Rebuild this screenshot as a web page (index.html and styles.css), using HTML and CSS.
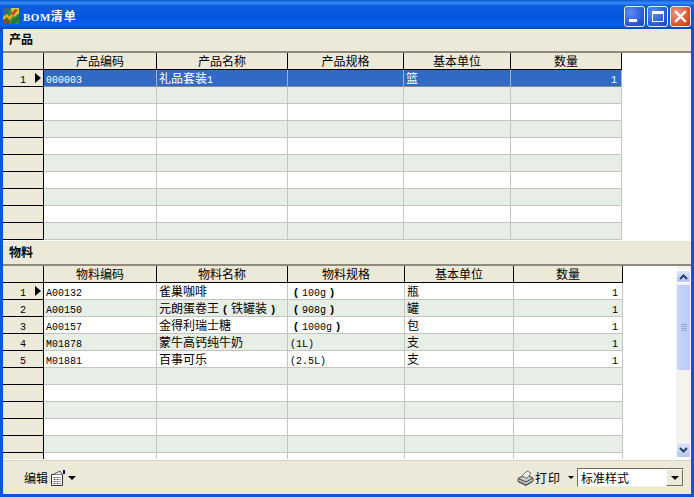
FILE: index.html
```html
<!DOCTYPE html>
<html lang="zh">
<head>
<meta charset="utf-8">
<title>BOM清单</title>
<link rel="stylesheet" href="styles.css">
</head>
<body>
<div class="window">
  <header class="titlebar">
    <svg class="app-icon" width="16" height="16" viewBox="0 0 16 16"><rect width="16" height="16" fill="#3d8a3c"/><path d="M0 0h8L5 5 0 7z" fill="#35648c"/><path d="M8 0h8v5l-5 4-2-3z" fill="#c8d040"/><path d="M0 9l4-3 2 3 5-7 3 0-7 10-3-3-4 3z" fill="#f0b020"/><path d="M8 6l4-5 3 1-5 6z" fill="#d8402a"/><path d="M0 12l5-1 2 5H0z" fill="#8a4a20"/><path d="M9 12l7-4v4l-4 4H8z" fill="#1c7a34"/></svg>
    <span class="title-text"><span class="lat">BOM</span>清单</span>
    <div class="caption-buttons">
      <div class="cap-btn cap-min"><i></i></div>
      <div class="cap-btn cap-max"><i></i></div>
      <div class="cap-btn cap-close">
        <svg width="13" height="13" viewBox="0 0 13 13"><path d="M2 2l9 9M11 2l-9 9" stroke="#fff" stroke-width="2.400" stroke-linecap="square"/></svg>
      </div>
    </div>
  </header>

  <main class="client">
    <div class="section-head section-head-top">产品</div>
    <div class="grid-wrap grid-wrap-top">
      <table class="grid grid-top">
        <colgroup><col class="c0"><col class="c1"><col class="c2"><col class="c3"><col class="c4"><col class="c5"></colgroup>
        <thead><tr><th></th><th>产品编码</th><th>产品名称</th><th>产品规格</th><th>基本单位</th><th>数量</th></tr></thead>
        <tbody>
          <tr class="selected"><th class="ind"><span>1</span><b class="arrow"></b></th><td><span class="lat">000003</span></td><td>礼品套装<span class="lat">1</span></td><td></td><td>篮</td><td class="num"><span class="lat">1</span></td></tr>
          <tr class="alt"><th></th><td></td><td></td><td></td><td></td><td></td></tr>
          <tr><th></th><td></td><td></td><td></td><td></td><td></td></tr>
          <tr class="alt"><th></th><td></td><td></td><td></td><td></td><td></td></tr>
          <tr><th></th><td></td><td></td><td></td><td></td><td></td></tr>
          <tr class="alt"><th></th><td></td><td></td><td></td><td></td><td></td></tr>
          <tr><th></th><td></td><td></td><td></td><td></td><td></td></tr>
          <tr class="alt"><th></th><td></td><td></td><td></td><td></td><td></td></tr>
          <tr><th></th><td></td><td></td><td></td><td></td><td></td></tr>
          <tr class="alt"><th></th><td></td><td></td><td></td><td></td><td></td></tr>
        </tbody>
      </table>
    </div>

    <div class="section-head section-head-bottom">物料</div>
    <div class="grid-wrap grid-wrap-bottom">
      <table class="grid grid-bottom">
        <colgroup><col class="c0"><col class="d1"><col class="d2"><col class="d3"><col class="d4"><col class="d5"></colgroup>
        <thead><tr><th></th><th>物料编码</th><th>物料名称</th><th>物料规格</th><th>基本单位</th><th>数量</th></tr></thead>
        <tbody>
          <tr><th class="ind"><span>1</span><b class="arrow"></b></th><td><span class="lat">A00132</span></td><td>雀巢咖啡</td><td><span class="paren">(</span><span class="lat">100g</span><span class="paren">)</span></td><td>瓶</td><td class="num"><span class="lat">1</span></td></tr>
          <tr class="alt"><th class="ind"><span>2</span></th><td><span class="lat">A00150</span></td><td>元朗蛋卷王<span class="paren">(</span>铁罐装<span class="paren">)</span></td><td><span class="paren">(</span><span class="lat">908g</span><span class="paren">)</span></td><td>罐</td><td class="num"><span class="lat">1</span></td></tr>
          <tr><th class="ind"><span>3</span></th><td><span class="lat">A00157</span></td><td>金得利瑞士糖</td><td><span class="paren">(</span><span class="lat">1000g</span><span class="paren">)</span></td><td>包</td><td class="num"><span class="lat">1</span></td></tr>
          <tr class="alt"><th class="ind"><span>4</span></th><td><span class="lat">M01878</span></td><td>蒙牛高钙纯牛奶</td><td><span class="lat">(1L)</span></td><td>支</td><td class="num"><span class="lat">1</span></td></tr>
          <tr><th class="ind"><span>5</span></th><td><span class="lat">M01881</span></td><td>百事可乐</td><td><span class="lat">(2.5L)</span></td><td>支</td><td class="num"><span class="lat">1</span></td></tr>
          <tr class="alt"><th></th><td></td><td></td><td></td><td></td><td></td></tr>
          <tr><th></th><td></td><td></td><td></td><td></td><td></td></tr>
          <tr class="alt"><th></th><td></td><td></td><td></td><td></td><td></td></tr>
          <tr><th></th><td></td><td></td><td></td><td></td><td></td></tr>
          <tr class="alt"><th></th><td></td><td></td><td></td><td></td><td></td></tr>
          <tr><th></th><td></td><td></td><td></td><td></td><td></td></tr>
        </tbody>
      </table>
      <div class="scrollbar">
        <div class="sb-btn sb-up"><svg width="9" height="6" viewBox="0 0 9 6"><path d="M1 5l3.500-3.500L8 5" fill="none" stroke="#2b3f6b" stroke-width="2"/></svg></div>
        <div class="sb-thumb"><i></i><i></i><i></i><i></i></div>
        <div class="sb-track"></div>
        <div class="sb-btn sb-down"><svg width="9" height="6" viewBox="0 0 9 6"><path d="M1 1l3.500 3.500L8 1" fill="none" stroke="#2b3f6b" stroke-width="2"/></svg></div>
      </div>
    </div>

    <footer class="toolbar">
      <div class="tool tool-edit">
        <span>编辑</span>
        <svg width="16" height="16" viewBox="0 0 16 16"><path d="M1.500 4.500h11v11h-11z" fill="#fff" stroke="#333"/><path d="M3 4.500l7-3.500 2.500 3.500" fill="#e4e4e4" stroke="#333" stroke-width=".8"/><path d="M3.500 7.500h7M3.500 9.500h7M3.500 11.500h7M3.500 13.500h7" stroke="#555" stroke-dasharray="2 1"/><rect x="13" y="0" width="2" height="4" fill="#00007a"/></svg>
        <b class="caret caret-edit"></b>
      </div>
      <div class="tool-right">
        <svg width="17" height="16" viewBox="0 0 17 16"><path d="M1 8.500l8-4 7 3.500v3l-7 4.500-8-4z" fill="#c9c9c9" stroke="#444"/><path d="M1 8.500l8 3.500 7-4" fill="none" stroke="#444"/><path d="M5 6l5-5 4 2-4 5z" fill="#fff" stroke="#555" stroke-width=".8"/><path d="M2 11l7 3.500 6-3.500v1.500l-6 3-7-3z" fill="#555"/></svg>
        <span class="print-label">打印</span>
        <b class="caret caret-print"></b>
        <div class="combo">
          <span>标准样式</span>
          <div class="combo-btn"><b class="caret caret-combo"></b></div>
        </div>
      </div>
    </footer>
  </main>
</div>
</body>
</html>
```

FILE: styles.css
```css
* { box-sizing: border-box; }
html, body { margin: 0; padding: 0; }
body {
  width: 694px;
  height: 497px;
  overflow: hidden;
  background: #ece9d8;
  font-family: "Noto Sans CJK SC", "Liberation Sans", sans-serif;
  font-size: 12px;
  color: #000;
}
.lat { font-family: "Liberation Mono", monospace; font-size: 10px; line-height: 10px; }
.paren {
  display: inline-block;
  width: 12px;
  text-align: center;
  font-family: "Liberation Mono", monospace;
  font-size: 11px;
  font-weight: 700;
  line-height: 10px;
}

.window {
  width: 694px;
  height: 497px;
  display: flex;
  flex-direction: column;
  background: #0a55e0;
}
.titlebar {
  height: 29px;
  flex: none;
  display: flex;
  align-items: center;
  padding: 3px 3px 0 3px;
  background: linear-gradient(#0a58d8 0, #3a8cf4 3px, #0a5ce4 6px, #0456dc 18px, #0660ec 25px, #0348bc 29px);
  color: #fff;
  font-weight: 700;
}
.app-icon { flex: none; margin-right: 4px; }
.title-text { font-size: 12px; letter-spacing: 1px; margin-top: -2px; }
.title-text .lat { font-size: 11px; font-family: "Liberation Serif", serif; letter-spacing: .5px; font-weight: 700; }
.caption-buttons { margin-left: auto; display: flex; gap: 2px; }
.cap-btn {
  width: 21px;
  height: 21px;
  border: 1px solid #e8f0ff;
  border-radius: 3px;
  background: radial-gradient(circle at 30% 30%, #5d8ef0, #2456d6 70%, #1a46b8);
  display: flex;
  align-items: center;
  justify-content: center;
  position: relative;
}
.cap-min i { position: absolute; left: 4px; bottom: 4px; width: 8px; height: 3px; background: #fff; }
.cap-max i { width: 12px; height: 11px; border: 1px solid #fff; border-top-width: 3px; }
.cap-close { background: radial-gradient(circle at 30% 30%, #ec9a80, #d8532c 65%, #b83a18); }

.client {
  flex: 1;
  margin: 0 3px 3px;
  min-height: 0;
  display: flex;
  flex-direction: column;
  background: #ece9d8;
}
.section-head {
  flex: none;
  font-weight: 700;
  font-size: 12px;
  padding: 0 0 3px 6px;
  display: flex;
  align-items: center;
  border-bottom: 2px solid #8e8b7e;
  background: #ece9d8;
}
.section-head-top { height: 24px; }
.section-head-bottom { height: 25px; }

.grid-wrap { flex: none; background: #fff; display: flex; overflow: hidden; position: relative; }
.grid-wrap-top { height: 188px; }
.grid-wrap-bottom { height: 193px; }
.grid {
  table-layout: fixed;
  border-collapse: separate;
  border-spacing: 0;
  flex: none;
  align-self: flex-start;
}
.grid-top { width: 619px; }
.grid-bottom { width: 620px; }
.c0 { width: 41px; }
.c1 { width: 113px; } .c2 { width: 131px; } .c3 { width: 116px; } .c4 { width: 107px; } .c5 { width: 111px; }
.d1 { width: 113px; } .d2 { width: 131px; } .d3 { width: 117px; } .d4 { width: 109px; } .d5 { width: 109px; }

.grid tr { height: 17px; }
.grid th, .grid td {
  height: 17px;
  padding: 0;
  font-weight: 400;
  font-size: 12px;
  line-height: 15px;
  vertical-align: top;
  overflow: hidden;
  white-space: nowrap;
}
.grid th {
  background: #ece9d8;
  border-right: 1px solid #000;
  border-bottom: 1px solid #000;
  text-align: center;
}
.grid td {
  background: #fff;
  border-right: 1px solid #c4c4c0;
  border-bottom: 1px solid #c4c4c0;
  padding-left: 2px;
}
.grid tr.alt td { background: #e7eee5; }
.grid tr.selected td { background: #316ac5; color: #fff; border-right-color: #9ab4dc; border-bottom-color: #888; }
.grid td.num { text-align: right; padding-right: 4px; }
.grid th.ind { position: relative; text-align: left; padding-left: 17px; }
.grid th.ind span { font-family: "Liberation Mono", monospace; font-size: 10px; line-height: 10px; }
.arrow {
  position: absolute;
  left: 32px;
  top: 3px;
  border-left: 6px solid #000;
  border-top: 5px solid transparent;
  border-bottom: 5px solid transparent;
}

.scrollbar {
  position: absolute;
  top: 0;
  left: 673px;
  width: 15px;
  height: 192px;
  display: flex;
  flex-direction: column;
  background: #f5f4ec;
  padding-top: 4px;
}
.sb-btn {
  height: 14px;
  flex: none;
  background: linear-gradient(#dbe5fb, #b4c7f1);
  border: 1px solid #fff;
  border-radius: 2px;
  display: flex;
  align-items: center;
  justify-content: center;
}
.sb-up { margin-bottom: 1px; height: 13px; }
.sb-thumb {
  height: 87px;
  flex: none;
  background: linear-gradient(90deg, #c8d6f8, #b9cbf5);
  border: 1px solid #f0f4ff;
  border-radius: 2px;
  display: flex;
  flex-direction: column;
  align-items: center;
  justify-content: center;
  gap: 1px;
}
.sb-thumb i { width: 6px; height: 1px; background: #8fa8e0; }
.sb-track { flex: 1; }
.sb-down { height: 16px; }

.toolbar {
  flex: 1;
  min-height: 0;
  display: flex;
  align-items: center;
  justify-content: space-between;
  padding: 1px 7px 0 21px;
  border-top: 1px solid #fff;
  box-shadow: inset 0 1px 0 #d8d5c5;
  background: #ece9d8;
}
.tool { display: flex; align-items: center; }
.tool-edit svg { margin-left: 2px; }
.tool-right { display: flex; align-items: center; }
.print-label { margin-left: 1px; letter-spacing: 1px; }
.caret {
  display: block;
  border-top: 4px solid #000;
  border-left: 4px solid transparent;
  border-right: 4px solid transparent;
}
.caret-edit { margin-left: 2px; }
.caret-print { margin: 0 3px 0 7px; border-width: 3px 3px 0; }
.combo {
  width: 107px;
  height: 19px;
  background: #fff;
  border: 1px solid;
  border-color: #716f64 #f1efe2 #f1efe2 #716f64;
  display: flex;
  align-items: center;
  justify-content: space-between;
  padding-left: 3px;
}
.combo-btn {
  width: 17px;
  height: 17px;
  background: #ece9d8;
  border: 1px solid;
  border-color: #fff #716f64 #716f64 #fff;
  display: flex;
  align-items: center;
  justify-content: center;
}
```
